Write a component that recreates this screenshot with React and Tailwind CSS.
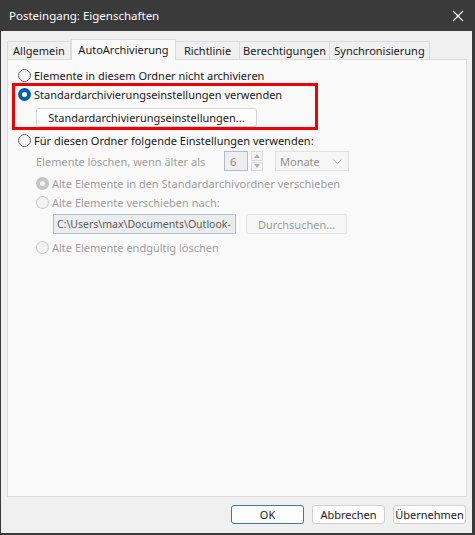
import React from 'react';

const font = { fontFamily: '"Segoe UI", "Noto Sans", "Open Sans", sans-serif' };

const Radio = ({ checked, disabled, label, className = '' }) => (
  <div className={`flex items-center gap-[3px] h-[16px] ${className}`}>
    {checked && !disabled && (
      <span className="w-[13px] h-[13px] rounded-full bg-[#005fb8] flex items-center justify-center shrink-0">
        <span className="w-[5px] h-[5px] rounded-full bg-white" />
      </span>
    )}
    {checked && disabled && (
      <span className="w-[13px] h-[13px] rounded-full bg-[#c5c5c5] flex items-center justify-center shrink-0">
        <span className="w-[5px] h-[5px] rounded-full bg-[#f3f3f3]" />
      </span>
    )}
    {!checked && (
      <span className={`w-[13px] h-[13px] rounded-full border shrink-0 ${disabled ? 'border-[#c8c8c8] bg-[#f3f3f3]' : 'border-[#5f5f5f] bg-[#f6f6f6]'}`} />
    )}
    <span className={disabled ? 'text-[#9d9d9d]' : 'text-[#1a1a1a]'}>{label}</span>
  </div>
);

const Tab = ({ label, active, className = '' }) => (
  <div
    className={
      active
        ? `h-[21px] -mb-px flex items-center justify-center pb-[2px] bg-[#f9f9f9] border border-b-0 border-[#dcdcdc] text-[#1a1a1a] relative z-10 ${className}`
        : `h-[18px] flex items-center justify-center border border-b-0 border-[#dcdcdc] text-[#1a1a1a] ${className}`
    }
  >
    {label}
  </div>
);

const Button = ({ label, primary, className = '' }) => (
  <div
    className={`h-[19px] rounded-[3px] flex items-center justify-center border bg-[#fdfdfd] ${primary ? 'border-[#3c78a8]' : 'border-[#d0d0d0]'} text-[#1a1a1a] ${className}`}
  >
    {label}
  </div>
);

export default function App() {
  return (
    <div className="w-[475px] h-[535px] bg-[#3a3a3a] flex flex-col text-[11px] leading-none" style={font}>
      {/* Title bar */}
      <div className="h-[31px] flex items-center justify-between pl-[9px] pr-[10px] text-white text-[11.5px]">
        <span>Posteingang: Eigenschaften</span>
        <svg width="12" height="12" viewBox="0 0 12 12" className="mr-[1px]">
          <path d="M1 1 L11 11 M11 1 L1 11" stroke="#ffffff" strokeWidth="1.1" />
        </svg>
      </div>

      {/* Body */}
      <div className="flex-1 ml-px mr-[3px] mb-[2px] bg-[#f0f0f0] flex flex-col px-[6px] pt-[8px]">
        {/* Tabs */}
        <div className="flex items-end h-[20px]">
          <Tab label="Allgemein" className="w-[64px]" />
          <Tab label="AutoArchivierung" active className="w-[105px]" />
          <Tab label="Richtlinie" className="w-[64px] border-l-0" />
          <Tab label="Berechtigungen" className="w-[90px] border-l-0" />
          <Tab label="Synchronisierung" className="w-[100px] border-l-0" />
        </div>

        {/* Panel */}
        <div className="h-[438px] bg-[#f9f9f9] border border-[#dcdcdc] w-[460px] pl-[10px] pt-[7px]">
          <Radio label="Elemente in diesem Ordner nicht archivieren" />

          <div className="-ml-[6px] w-[306px] h-[47px] border-[3px] border-[#f00000] pl-[3px]">
            <Radio checked label="Standardarchivierungseinstellungen verwenden" />
            <Button label="Standardarchivierungseinstellungen..." className="ml-[18px] mt-[6px] w-[221px] border-[#d3d3d3]" />
          </div>

          <Radio label="Für diesen Ordner folgende Einstellungen verwenden:" className="mt-[2px]" />

          <div className="pl-[18px] text-[#9d9d9d]">
            <div className="flex items-center h-[20px] mt-[3px]">
              <span className="w-[188px]">Elemente löschen, wenn älter als</span>
              <div className="w-[24px] h-[20px] border border-[#a9bfd6] bg-[#eeeeee] flex items-center pl-[5px] text-[#8a8a8a]">6</div>
              <div className="ml-[3px] w-[12px] h-[20px] flex flex-col gap-px">
                <div className="flex-1 border border-[#dadada] bg-[#f4f4f4] flex items-center justify-center">
                  <svg width="6" height="4" viewBox="0 0 6 4"><path d="M0 4 L3 0 L6 4 Z" fill="#b0b0b0" /></svg>
                </div>
                <div className="flex-1 border border-[#dadada] bg-[#f4f4f4] flex items-center justify-center">
                  <svg width="6" height="4" viewBox="0 0 6 4"><path d="M0 0 L3 4 L6 0 Z" fill="#b0b0b0" /></svg>
                </div>
              </div>
              <div className="ml-[12px] w-[74px] h-[20px] border border-[#e2e2e2] bg-[#f6f6f6] flex items-center justify-between pl-[4px] pr-[6px] text-[#8f8f8f]">
                <span>Monate</span>
                <svg width="9" height="5" viewBox="0 0 9 5"><path d="M0.5 0.5 L4.5 4.5 L8.5 0.5" stroke="#c0c0c0" fill="none" /></svg>
              </div>
            </div>

            <Radio checked disabled label="Alte Elemente in den Standardarchivordner verschieben" className="mt-[4px]" />
            <Radio disabled label="Alte Elemente verschieben nach:" className="mt-[3px]" />

            <div className="flex items-center ml-[17px] mt-[4px] h-[20px]">
              <div className="w-[183px] h-[20px] border border-[#a9bfd6] bg-[#ececec] flex items-center pl-[3px] overflow-hidden whitespace-nowrap text-[#5c5c5c]">
                <span className="text-[10.5px]">C:\Users\max\Documents\Outlook-</span>
              </div>
              <div className="ml-[10px] w-[101px] h-[20px] border border-[#e2e2e2] bg-[#f6f6f6] rounded-[2px] flex items-center justify-center">
                Durchsuchen...
              </div>
            </div>

            <Radio disabled label="Alte Elemente endgültig löschen" className="mt-[5px]" />
          </div>
        </div>

        {/* Footer buttons */}
        <div className="flex justify-end gap-[8px] mt-[8px]">
          <Button primary label="OK" className="w-[73px]" />
          <Button label="Abbrechen" className="w-[73px]" />
          <Button label="Übernehmen" className="w-[73px]" />
        </div>
      </div>
    </div>
  );
}
